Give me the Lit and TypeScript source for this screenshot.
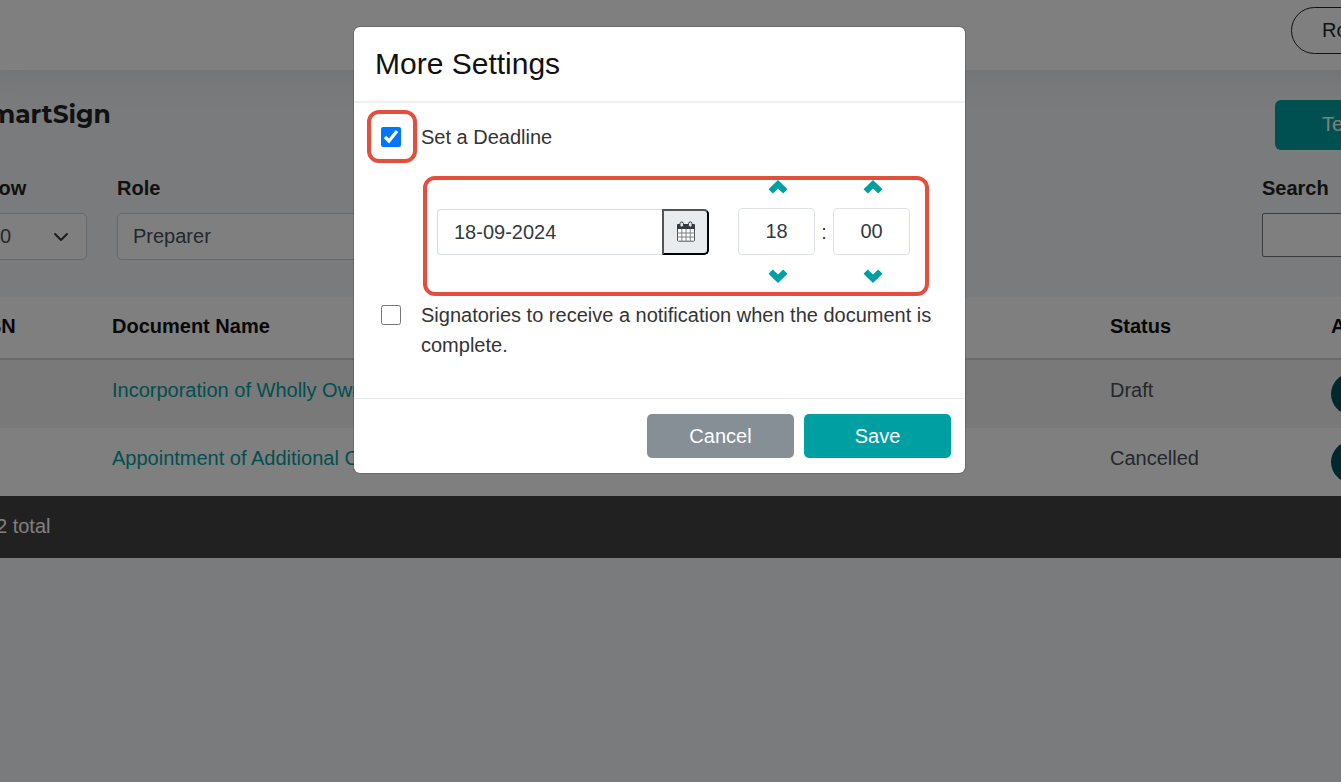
import { LitElement, html, css } from "lit";
import { customElement, state } from "lit/decorators.js";

interface DocumentRow {
  name: string;
  status: string;
}

const pad = (n: number) => String(n).padStart(2, "0");

@customElement("time-stepper")
class TimeStepper extends LitElement {
  static properties = {
    label: { type: String },
    value: { type: Number },
    max: { type: Number },
  };

  declare label: string;
  declare value: number;
  declare max: number;

  constructor() {
    super();
    this.label = "";
    this.value = 0;
    this.max = 60;
  }

  static styles = css`
    :host {
      display: flex;
      flex-direction: column;
      gap: 8px;
      width: 77px;
    }
    .step {
      display: flex;
      align-items: center;
      justify-content: center;
      height: 26px;
      padding: 0 0 0 3px;
      border: 0;
      background: none;
      cursor: pointer;
    }
    .arrow {
      width: 20px;
      height: 14px;
      fill: #009fa2;
    }
    .field {
      box-sizing: border-box;
      width: 100%;
      height: 47px;
      padding: 0;
      border: 1px solid #dde1e6;
      border-radius: 4px;
      background: #fff;
      color: #343a40;
      font: 20px "Liberation Sans", Arial, sans-serif;
      text-align: center;
    }
  `;

  private step(delta: number) {
    this.value = (this.value + delta + this.max) % this.max;
  }

  render() {
    return html`
      <button class="step" aria-label="Increase ${this.label}" @click=${() => this.step(1)}>
        <svg class="arrow" viewBox="0 0 20 14"><path d="M10 0 19.5 9.2 15.2 13.5 10 8.4 4.8 13.5 0.5 9.2Z" /></svg>
      </button>
      <input class="field" aria-label=${this.label} .value=${pad(this.value)} />
      <button class="step" aria-label="Decrease ${this.label}" @click=${() => this.step(-1)}>
        <svg class="arrow" viewBox="0 0 20 14"><path d="M10 14 19.5 4.8 15.2 0.5 10 5.6 4.8 0.5 0.5 4.8Z" /></svg>
      </button>
    `;
  }
}

@customElement("settings-dialog")
class SettingsDialog extends LitElement {
  static styles = css`
    :host {
      display: block;
      width: 100%;
      max-width: 611px;
      font: 20px/30px "Liberation Sans", Arial, sans-serif;
      color: #343434;
    }
    .dialog {
      background: #fff;
      border-radius: 6px;
      box-shadow: 0 0 0 1px rgba(0, 0, 0, 0.15);
    }
    .head {
      padding: 19px 21px;
      border-bottom: 2px solid #eceff3;
    }
    .title {
      margin: 0;
      font-size: 30px;
      line-height: 36px;
      font-weight: 400;
      color: #111;
    }
    .body {
      padding: 19px 24px 38px 27px;
    }
    .option {
      display: grid;
      grid-template-columns: 20px 1fr;
      column-gap: 20px;
      align-items: start;
    }
    .tick {
      position: relative;
      display: flex;
      align-items: center;
      height: 30px;
    }
    .box {
      width: 20px;
      height: 20px;
      margin: 0;
    }
    .ring {
      position: absolute;
      border: 4px solid #e34f3c;
      border-radius: 12px;
      pointer-events: none;
    }
    .ring-tick {
      inset: -12px -16px -11px -14px;
    }
    .ring-time {
      inset: 24px 12px 4px 42px;
    }
    .deadline {
      position: relative;
      display: flex;
      align-items: center;
      padding: 22px 0 11px 56px;
    }
    .date {
      display: flex;
      height: 46px;
      width: 272px;
      margin-right: 29px;
    }
    .date-field {
      box-sizing: border-box;
      flex: 1;
      min-width: 0;
      padding: 0 16px;
      border: 1px solid #d5dce3;
      border-right: 0;
      border-radius: 4px 0 0 4px;
      background: #fff;
      color: #343a40;
      font: inherit;
    }
    .date-button {
      display: flex;
      align-items: center;
      justify-content: center;
      box-sizing: border-box;
      width: 47px;
      padding: 0;
      border: 2px outset #000;
      border-radius: 0 5px 5px 0;
      background: #e9ecef;
    }
    .calendar {
      width: 20px;
      height: 22px;
    }
    .colon {
      width: 18px;
      text-align: center;
    }
    .foot {
      display: flex;
      justify-content: flex-end;
      gap: 10px;
      padding: 15px 14px;
      border-top: 1px solid #e6e9ed;
    }
    .action {
      width: 147px;
      height: 44px;
      padding: 0;
      border: 0;
      border-radius: 5px;
      color: #fff;
      font: inherit;
    }
    .cancel {
      background: #868e96;
    }
    .save {
      background: #009fa2;
    }
  `;

  private calendar() {
    return html`<svg class="calendar" viewBox="0 0 20 22" aria-hidden="true">
      <path d="M2 3h16a1 1 0 0 1 1 1v4H1V4a1 1 0 0 1 1-1z" fill="#343a40" />
      <path d="M1.5 8v11.2a1 1 0 0 0 1 1h15a1 1 0 0 0 1-1V8" fill="#fff" stroke="#50565c" />
      <path d="M5.8 8v12M10 8v12M14.2 8v12M1.5 12h17M1.5 16h17" stroke="#7b8085" />
      <rect x="4" y="1" width="3.4" height="5" rx="1.5" fill="#e9ecef" stroke="#343a40" />
      <rect x="12.6" y="1" width="3.4" height="5" rx="1.5" fill="#e9ecef" stroke="#343a40" />
    </svg>`;
  }

  render() {
    return html`
      <section class="dialog" role="dialog" aria-labelledby="title">
        <header class="head"><h2 class="title" id="title">More Settings</h2></header>
        <div class="body">
          <div class="option">
            <span class="tick">
              <input class="box" id="deadline" type="checkbox" checked />
              <span class="ring ring-tick"></span>
            </span>
            <label for="deadline">Set a Deadline</label>
          </div>
          <div class="deadline">
            <div class="date">
              <input class="date-field" aria-label="Deadline date" value="18-09-2024" />
              <button class="date-button" aria-label="Choose date">${this.calendar()}</button>
            </div>
            <time-stepper label="Hours" .value=${18} .max=${24}></time-stepper>
            <span class="colon">:</span>
            <time-stepper label="Minutes" .value=${0} .max=${60}></time-stepper>
            <span class="ring ring-time"></span>
          </div>
          <div class="option">
            <span class="tick"><input class="box" id="notify" type="checkbox" /></span>
            <label for="notify">Signatories to receive a notification when the document is complete.</label>
          </div>
        </div>
        <footer class="foot">
          <button class="action cancel">Cancel</button>
          <button class="action save">Save</button>
        </footer>
      </section>
    `;
  }
}

@customElement("app-root")
class AppRoot extends LitElement {
  @state() private rows: DocumentRow[] = [
    { name: "Incorporation of Wholly Owned", status: "Draft" },
    { name: "Appointment of Additional Co", status: "Cancelled" },
  ];

  static styles = css`
    :host {
      display: block;
      position: relative;
      min-height: 100vh;
      overflow: hidden;
      background: #f4f6fa;
      color: #495057;
      font: 20px/30px "Liberation Sans", Arial, sans-serif;
    }
    .page {
      margin: 0 -119px 0 -27px;
    }
    .topbar {
      display: flex;
      justify-content: flex-end;
      box-sizing: border-box;
      height: 70px;
      padding: 7px 0;
      background: #fff;
      box-shadow: 0 4px 40px rgba(0, 0, 0, 0.08);
    }
    .profile {
      width: 169px;
      height: 47px;
      padding: 0 30px 2px;
      border: 1px solid #222;
      border-radius: 24px;
      background: none;
      color: #212529;
      font: inherit;
      text-align: left;
    }
    .heading {
      display: flex;
      justify-content: space-between;
      align-items: flex-start;
      padding-top: 30px;
    }
    .brand {
      margin: 0;
      color: #222;
      font: 700 25px/28px Montserrat, Inter, sans-serif;
    }
    .templates {
      width: 185px;
      height: 50px;
      padding: 0 0 2px;
      border: 0;
      border-radius: 6px;
      background: #009fa2;
      color: #fff;
      font: inherit;
    }
    .filters {
      display: flex;
      align-items: flex-start;
      gap: 30px;
      padding: 23px 0 37px;
    }
    .filter {
      display: flex;
      flex-direction: column;
      gap: 10px;
    }
    .caption {
      color: #222;
      font-weight: 700;
    }
    .select {
      appearance: none;
      box-sizing: border-box;
      height: 47px;
      padding: 0 15px 2px;
      border: 1px solid #ccd2d9;
      border-radius: 5px;
      background-color: #fff;
      color: #495057;
      font: inherit;
    }
    .pick {
      display: grid;
      align-items: center;
    }
    .pick > * {
      grid-area: 1 / 1;
    }
    .chevron {
      justify-self: end;
      width: 16px;
      height: 16px;
      margin-right: 18px;
      pointer-events: none;
    }
    .count {
      width: 114px;
    }
    .role {
      width: 300px;
    }
    .search {
      width: 198px;
      margin-left: auto;
    }
    .query {
      box-sizing: border-box;
      width: 100%;
      height: 44px;
      border: 1px solid #767676;
      border-radius: 2px;
      background: #fff;
      font: inherit;
    }
    .table {
      width: 100%;
      table-layout: fixed;
      border-collapse: separate;
      border-spacing: 0;
      background: #fff;
    }
    th,
    td {
      padding: 15px;
      text-align: left;
      vertical-align: top;
      white-space: nowrap;
    }
    th {
      color: #111;
      padding: 14px 15px 17px;
      border-bottom: 2px solid #d5d5d5;
    }
    .striped td {
      background: #f2f2f2;
    }
    .col-sn {
      width: 94px;
    }
    .col-status {
      width: 191px;
    }
    .col-action {
      width: 114px;
    }
    td.action-cell {
      padding: 13px 15px;
    }
    .more {
      display: block;
      width: 42px;
      height: 42px;
      padding: 0;
      border: 0;
      border-radius: 50%;
      background: #00505c;
    }
    .link {
      color: #009fa2;
      text-decoration: none;
    }
    .total {
      padding: 15px 23px 17px;
      background: #434343;
      color: #fff;
    }
    .backdrop {
      position: absolute;
      inset: 0;
      display: flex;
      justify-content: center;
      align-items: flex-start;
      padding: 27px 22px 27px 0;
      background: rgba(0, 0, 0, 0.5);
    }
  `;

  private chevron() {
    return html`<svg class="chevron" viewBox="0 0 16 16" fill="none" stroke="#343a40" stroke-width="2" stroke-linecap="round" stroke-linejoin="round">
      <path d="M2 5l6 6 6-6" />
    </svg>`;
  }

  render() {
    return html`
      <div class="page">
        <header class="topbar"><button class="profile">Roles</button></header>
        <div class="heading">
          <h1 class="brand">SmartSign</h1>
          <button class="templates">Templates</button>
        </div>
        <div class="filters">
          <div class="filter count">
            <label class="caption" for="count">Show</label>
            <div class="pick">
              <select class="select" id="count"><option>10</option></select>
              ${this.chevron()}
            </div>
          </div>
          <div class="filter role">
            <label class="caption" for="role">Role</label>
            <div class="pick">
              <select class="select" id="role"><option>Preparer</option></select>
              ${this.chevron()}
            </div>
          </div>
          <div class="filter search">
            <label class="caption" for="query">Search</label>
            <input class="query" id="query" type="search" />
          </div>
        </div>
        <table class="table">
          <thead>
            <tr>
              <th class="col-sn">SN</th>
              <th>Document Name</th>
              <th class="col-status">Status</th>
              <th class="col-action">Action</th>
            </tr>
          </thead>
          <tbody>
            ${this.rows.map(
              (row, i) => html`<tr class=${i % 2 ? "" : "striped"}>
                <td></td>
                <td><a class="link" href="#">${row.name}</a></td>
                <td>${row.status}</td>
                <td class="action-cell"><button class="more" aria-label="Open"></button></td>
              </tr>`
            )}
          </tbody>
        </table>
        <div class="total">2 total</div>
      </div>
      <div class="backdrop"><settings-dialog></settings-dialog></div>
    `;
  }
}
